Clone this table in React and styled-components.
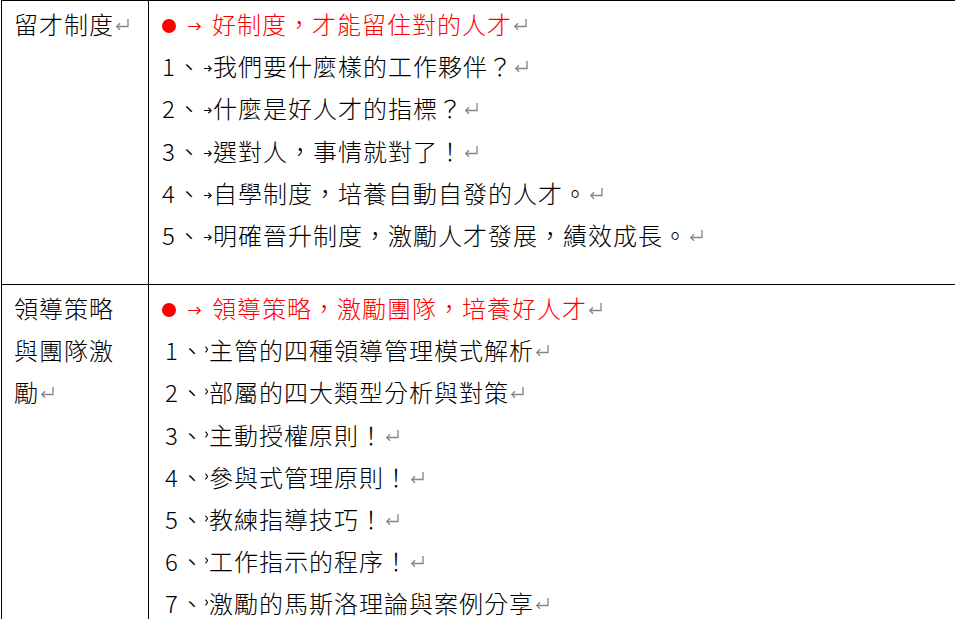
import React from 'react';
import styled, { createGlobalStyle } from 'styled-components';

const GlobalStyle = createGlobalStyle`
	html, body {
		margin: 0;
		padding: 0;
		height: 100%;
		overflow: hidden;
		background: #ffffff;
	}
	body {
		font-family: "Noto Sans CJK TC", "Noto Sans", sans-serif;
		font-weight: 300;
		color: #000000;
	}
`;

const Table = styled.div`
	display: grid;
	grid-template-columns: 147px 1fr;
	grid-template-rows: 284px auto;
	margin-left: 1px;
	border-top: 1px solid #000;
	border-left: 1px solid #000;
`;

const LabelCell = styled.div`
	padding: 2px 13px 0 12px;
	border-right: 1px solid #000;
	border-bottom: 1px solid #000;
	font-size: 24px;
	line-height: 42.2px;
	letter-spacing: 1px;
`;

const ContentCell = styled.div`
	padding: 2px 0 0 13px;
	border-bottom: 1px solid #000;
`;

const Para = styled.div`
	height: 42.2px;
	font-size: 24px;
	line-height: 42.2px;
	letter-spacing: 1px;
	white-space: nowrap;
	color: ${p => (p.$red ? '#f00' : '#000')};
`;

const Bullet = styled.span`
	display: inline-block;
	width: 14px;
	height: 14px;
	border-radius: 50%;
	background: #f00;
	vertical-align: 1px;
`;

const RedArrow = styled.svg`
	display: inline-block;
	width: 13px;
	height: 9px;
	margin: 0 11px 0 12px;
	vertical-align: 3px;
`;

const Num = styled.span`
	display: inline-block;
	width: 15px;
	margin-left: ${p => p.$indent}px;
`;

const TabMark = styled.svg`
	display: inline-block;
	width: ${p => p.$w}px;
	height: 7px;
	margin: 0 1px 0 ${p => p.$pad}px;
	vertical-align: ${p => p.$lift}px;
`;

const ReturnMark = styled.svg`
	display: inline-block;
	width: 14px;
	height: 13px;
	margin-left: 1px;
	vertical-align: 3px;
`;

const sections = [
	{
		label: '留才制度',
		head: '好制度，才能留住對的人才',
		tab: 'arrow',
		indent: 0,
		items: [
			'我們要什麼樣的工作夥伴？',
			'什麼是好人才的指標？',
			'選對人，事情就對了！',
			'自學制度，培養自動自發的人才。',
			'明確晉升制度，激勵人才發展，績效成長。',
		],
	},
	{
		label: '領導策略與團隊激勵',
		head: '領導策略，激勵團隊，培養好人才',
		tab: 'chevron',
		indent: 3,
		items: [
			'主管的四種領導管理模式解析',
			'部屬的四大類型分析與對策',
			'主動授權原則！',
			'參與式管理原則！',
			'教練指導技巧！',
			'工作指示的程序！',
			'激勵的馬斯洛理論與案例分享',
		],
	},
];

const Mark = () => (
	<ReturnMark viewBox="0 0 14 13" fill="none" stroke="#858585" strokeWidth="1.3">
		<path d="M13 1V8.5H1.8" />
		<path d="M5 5.3L1.8 8.5L5 11.7" />
	</ReturnMark>
);

const Tab = ({ kind }) =>
	kind === 'arrow' ? (
		<TabMark $w={8} $pad={2} $lift={4} viewBox="0 0 8 7" fill="none" stroke="#111" strokeWidth="1.2">
			<path d="M0 3.5H7.2M4.4 0.8L7.2 3.5L4.4 6.2" />
		</TabMark>
	) : (
		<TabMark $w={3} $pad={0} $lift={7} viewBox="0 0 3 7" fill="none" stroke="#111" strokeWidth="1.1">
			<path d="M0.4 0.6L2.6 3.5L0.4 6.4" />
		</TabMark>
	);

const App = () => (
	<>
		<GlobalStyle />
		<Table>
			{sections.map(section => (
				<React.Fragment key={section.label}>
					<LabelCell>
						{section.label}
						<Mark />
					</LabelCell>
					<ContentCell>
						<Para $red>
							<Bullet />
							<RedArrow viewBox="0 0 13 9" fill="none" stroke="#f00" strokeWidth="1.2">
								<path d="M0 4.5H12.2M8.6 1L12.2 4.5L8.6 8" />
							</RedArrow>
							{section.head}
							<Mark />
						</Para>
						{section.items.map((item, i) => (
							<Para key={item}>
								<Num $indent={section.indent}>{i + 1}</Num>、
								<Tab kind={section.tab} />
								{item}
								<Mark />
							</Para>
						))}
					</ContentCell>
				</React.Fragment>
			))}
		</Table>
	</>
);

export default App;
